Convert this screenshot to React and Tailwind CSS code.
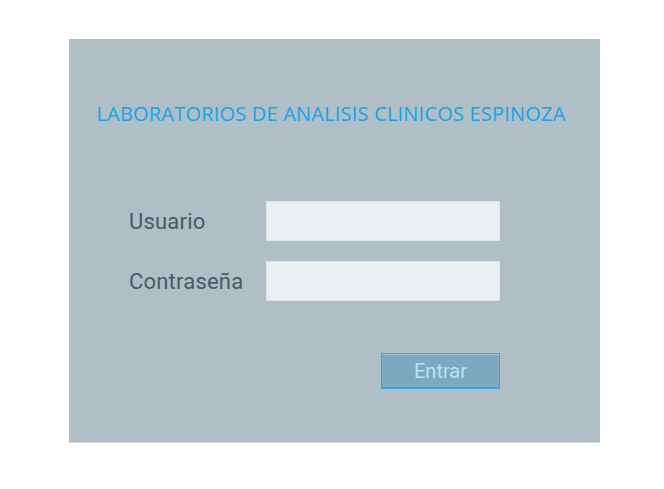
import React from 'react';

export default function App() {
  return (
    <div className="w-[664px] h-[489px] bg-white pt-[39px] pl-[69px]">
      <div className="w-[531px] h-[404px] bg-[#b0bec5] border-b border-[#d4dbe8] flex flex-col">
        <h1
          className="mt-[61px] pr-[7px] text-center text-[20px] leading-[28px] tracking-[0.2px] text-[#14a5f0]"
          style={{ fontFamily: '"Open Sans", "Noto Sans", sans-serif' }}
        >
          LABORATORIOS DE ANALISIS CLINICOS ESPINOZA
        </h1>

        <div
          className="mt-[73px] ml-[60px] flex flex-col gap-[20px]"
          style={{ fontFamily: 'Roboto, "Liberation Sans", sans-serif' }}
        >
          <div className="flex items-center">
            <label className="w-[137px] text-[22px] tracking-[0.2px] text-[#4a5a65]">Usuario</label>
            <input
              type="text"
              className="w-[234px] h-[40px] bg-[#eceff1] border border-[#dde3e8] outline-none px-2"
            />
          </div>
          <div className="flex items-center">
            <label className="w-[137px] text-[22px] tracking-[0.2px] text-[#4a5a65]">Contraseña</label>
            <input
              type="password"
              className="w-[234px] h-[40px] bg-[#eceff1] border border-[#dde3e8] outline-none px-2"
            />
          </div>
        </div>

        <div className="mt-[52px] ml-[312px]">
          <button
            className="w-[119px] h-[36px] bg-[#7ea8c0] border border-[#2ea8f2] border-b-2 text-[20px] leading-none text-[#b8e2fa] shadow-[inset_0_1px_0_#9cc7e0]"
            style={{ fontFamily: 'Roboto, "Liberation Sans", sans-serif' }}
          >
            Entrar
          </button>
        </div>
      </div>
    </div>
  );
}
